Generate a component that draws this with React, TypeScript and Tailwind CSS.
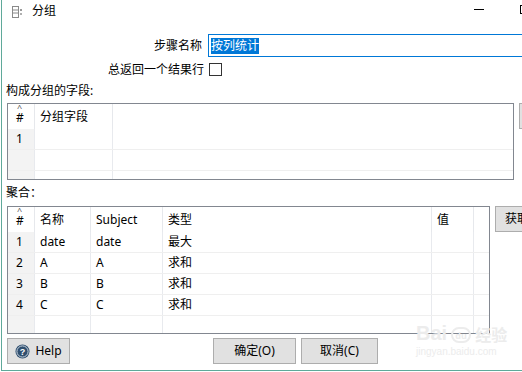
import React from "react";

const font = "font-['Noto_Sans','Noto_Sans_CJK_SC',sans-serif]";

const TitleIcon = () => (
  <svg width="11" height="12" viewBox="0 0 11 12" className="shrink-0">
    <rect x="0.5" y="0.5" width="6" height="11" fill="none" stroke="#8a8a8a" />
    <line x1="1" y1="4" x2="6" y2="4" stroke="#8a8a8a" />
    <line x1="1" y1="7" x2="6" y2="7" stroke="#8a8a8a" />
    <rect x="8" y="3" width="2" height="2" fill="#9a9a9a" />
    <rect x="8" y="7" width="2" height="2" fill="#b0b0b0" />
  </svg>
);

const HelpIcon = () => (
  <svg width="15" height="15" viewBox="0 0 15 15" className="shrink-0">
    <circle cx="7.5" cy="7.5" r="7" fill="#2f4f6f" />
    <circle cx="7.5" cy="7.5" r="5.6" fill="none" stroke="#c9d3dd" strokeWidth="1" />
    <text x="7.5" y="11" textAnchor="middle" fontSize="9" fontWeight="700" fill="#ffffff" fontFamily="Liberation Sans, sans-serif">
      ?
    </text>
  </svg>
);

const Button = ({ label, w, children }: { label?: string; w: string; children?: React.ReactNode }) => (
  <div className={`${w} h-[26px] shrink-0 bg-[#e1e1e1] border border-[#adadad] flex items-center justify-center gap-[5px] text-[12px] text-black`}>
    {children}
    {label}
  </div>
);

type Col = { title: string; w: string };

const HeaderCell = ({ col, first }: { col: Col; first?: boolean }) => (
  <div className={`${col.w} h-full shrink-0 border-r border-[#e6e8ec] relative flex items-center ${first ? "pl-[8px]" : "pl-[5px]"}`}>
    {first && (
      <span className="absolute left-[9px] top-[-1px] text-[9px] leading-none text-[#555]">^</span>
    )}
    <span className={first ? "mt-[2px]" : ""}>{col.title}</span>
  </div>
);

const DataTable = ({
  cols,
  rows,
  width,
  lastRowH,
}: {
  cols: Col[];
  rows: string[][];
  width: string;
  lastRowH: string;
}) => (
  <div className={`${width} shrink-0 border border-[#828790] bg-white text-[12px] text-black flex flex-col`}>
    <div className="h-[25px] flex">
      {cols.map((c, i) => (
        <HeaderCell key={i} col={c} first={i === 0} />
      ))}
      <div className="flex-1" />
    </div>
    {rows.map((r, ri) => (
      <div key={ri} className="h-[21px] flex border-b border-[#efefef]">
        {cols.map((c, i) => (
          <div
            key={i}
            className={`${c.w} h-full shrink-0 border-r border-[#e8eaee] flex items-center ${
              i === 0 ? "bg-[#f3f3f3] pl-[8px]" : "pl-[5px]"
            }`}
          >
            {r[i] ?? ""}
          </div>
        ))}
        <div className="flex-1" />
      </div>
    ))}
    <div className={`${lastRowH} flex`}>
      {cols.map((c, i) => (
        <div key={i} className={`${c.w} h-full shrink-0 border-r border-[#e8eaee] ${i === 0 ? "bg-[#f3f3f3]" : ""}`} />
      ))}
      <div className="flex-1" />
    </div>
  </div>
);

export default function App() {
  const groupCols: Col[] = [
    { title: "#", w: "w-[27px]" },
    { title: "分组字段", w: "w-[78px]" },
  ];
  const aggCols: Col[] = [
    { title: "#", w: "w-[27px]" },
    { title: "名称", w: "w-[56px]" },
    { title: "Subject", w: "w-[72px]" },
    { title: "类型", w: "w-[269px]" },
    { title: "值", w: "w-[42px]" },
  ];
  const aggRows = [
    ["1", "date", "date", "最大", ""],
    ["2", "A", "A", "求和", ""],
    ["3", "B", "B", "求和", ""],
    ["4", "C", "C", "求和", ""],
  ];

  return (
    <div className={`${font} w-[522px] h-[372px] bg-white overflow-hidden relative pl-px`}>
      <div className="h-[371px] border-l border-b border-[#5fa99a] flex flex-col overflow-hidden">
        {/* title bar */}
        <div className="h-[22px] flex items-center shrink-0">
          <div className="ml-[10px] mt-[1px]">
            <TitleIcon />
          </div>
          <span className="ml-[9px] text-[12px] text-black">分组</span>
          <div className="ml-auto mr-[-26px] flex h-full shrink-0">
            <div className="w-[46px] flex justify-center pt-[9px]">
              <div className="w-[10px] h-px bg-black" />
            </div>
            <div className="w-[46px] flex justify-center pt-[5px]">
              <div className="w-[10px] h-[9px] border border-black" />
            </div>
          </div>
        </div>

        {/* step name */}
        <div className="mt-[12px] h-[23px] flex items-center shrink-0 text-[12px] text-black">
          <div className="w-[200px] shrink-0 text-right">步骤名称</div>
          <div className="ml-[6px] w-[330px] h-[23px] shrink-0 border border-[#0078d7] flex items-center">
            <span className="ml-[2px] bg-[#0078d7] text-white leading-[16px]">按列统计</span>
          </div>
        </div>

        {/* single row checkbox */}
        <div className="mt-[6px] h-[13px] flex items-center shrink-0 text-[12px] text-black">
          <div className="w-[202px] shrink-0 text-right">总返回一个结果行</div>
          <div className="ml-[5px] w-[13px] h-[13px] shrink-0 border border-[#333] bg-white" />
        </div>

        <div className="mt-[7px] ml-[4px] h-[16px] flex items-center text-[12px] text-black shrink-0">
          构成分组的字段:
        </div>

        <div className="mt-[4px] ml-[5px] flex items-start shrink-0">
          <DataTable cols={groupCols} rows={[["1", ""], ["", ""]]} width="w-[507px]" lastRowH="h-[8px]" />
          <div className="ml-[5px] w-[40px] h-[26px] bg-[#e1e1e1] border border-[#adadad] shrink-0" />
        </div>

        <div className="mt-[5px] ml-[4px] h-[16px] flex items-center text-[12px] text-black shrink-0">
          聚合：
        </div>

        <div className="mt-[5px] ml-[5px] flex items-start shrink-0">
          <DataTable cols={aggCols} rows={aggRows} width="w-[483px]" lastRowH="h-[17px]" />
          <div className="ml-[5px] w-[60px] h-[26px] bg-[#e1e1e1] border border-[#adadad] shrink-0 flex items-center pl-[9px] text-[12px] text-black whitespace-nowrap">
            获取字段
          </div>
        </div>

        {/* bottom buttons */}
        <div className="mt-[4px] ml-[5px] flex items-center shrink-0">
          <Button w="w-[63px]">
            <HelpIcon />
            <span>Help</span>
          </Button>
          <div className="w-[143px]" />
          <Button w="w-[83px]" label="确定(O)" />
          <div className="w-[5px]" />
          <Button w="w-[77px]" label="取消(C)" />
        </div>
      </div>

      {/* watermark */}
      <div className="absolute left-[416px] top-[323px] pointer-events-none select-none text-[#ececec] leading-none">
        <div className="flex items-end gap-[4px]">
          <span className="text-[20px] font-bold font-['Liberation_Sans',sans-serif]">Bai</span>
          <span className="w-[20px] h-[16px] rounded-full border-2 border-[#ececec] text-[9px] flex items-center justify-center font-bold">du</span>
          <span className="text-[16px] font-bold">经验</span>
        </div>
        <div className="mt-[4px] text-[10px] font-['Liberation_Sans',sans-serif]">jingyan.baidu.com</div>
      </div>
    </div>
  );
}
